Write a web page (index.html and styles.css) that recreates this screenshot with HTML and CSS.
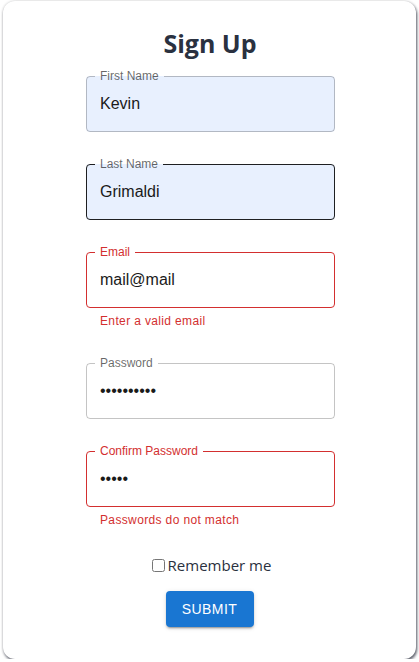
FILE: index.html
```html
<!DOCTYPE html>
<html lang="en">
<head>
<meta charset="utf-8">
<title>Sign Up</title>
<link rel="stylesheet" href="styles.css">
</head>
<body>
<div class="card">
  <h1 class="title">Sign Up</h1>
  <form class="form">
    <div class="field autofill">
      <input class="input" type="text" value="Kevin">
      <fieldset class="outline"><legend class="label">First Name</legend></fieldset>
    </div>
    <div class="field autofill hover">
      <input class="input" type="text" value="Grimaldi">
      <fieldset class="outline"><legend class="label">Last Name</legend></fieldset>
    </div>
    <div class="field-wrap">
      <div class="field error">
        <input class="input" type="text" value="mail@mail">
        <fieldset class="outline"><legend class="label">Email</legend></fieldset>
      </div>
      <p class="helper">Enter a valid email</p>
    </div>
    <div class="field">
      <input class="input" type="password" value="abcdefghij">
      <fieldset class="outline"><legend class="label">Password</legend></fieldset>
    </div>
    <div class="field-wrap last">
      <div class="field error">
        <input class="input" type="password" value="abcde">
        <fieldset class="outline"><legend class="label">Confirm Password</legend></fieldset>
      </div>
      <p class="helper">Passwords do not match</p>
    </div>
    <label class="remember"><input class="check" type="checkbox">Remember me</label>
    <button class="submit" type="button">SUBMIT</button>
  </form>
</div>
</body>
</html>
```

FILE: styles.css
```css
html, body {
  margin: 0;
  padding: 0;
  background: #ffffff;
}

.card {
  box-sizing: border-box;
  margin: 1px 3px 0 3px;
  width: 413px;
  height: 658px;
  border-radius: 12px;
  background: #ffffff;
  box-shadow: 1px 2px 3px rgba(40, 44, 60, 0.75), 0 0 3px rgba(0, 0, 0, 0.18);
  display: flex;
  flex-direction: column;
  align-items: center;
  padding-top: 25px;
}

.title {
  margin: 0 0 0 1px;
  font-family: "Open Sans", sans-serif;
  font-weight: 700;
  font-size: 25px;
  line-height: 34px;
  color: #2a3140;
}

.form {
  margin-top: 16px;
  display: flex;
  flex-direction: column;
  align-items: center;
}

.field {
  position: relative;
  width: 249px;
  height: 56px;
  margin: 0 0 32px 2px;
  border-radius: 4px;
}

.field-wrap {
  display: flex;
  flex-direction: column;
  margin: 0 0 32px 2px;
}

.field-wrap .field {
  margin: 0;
}

.field-wrap.last {
  margin-bottom: 23px;
}

.input {
  box-sizing: border-box;
  width: 100%;
  height: 56px;
  margin: 0;
  padding: 16.5px 14px;
  border: 0;
  border-radius: 4px;
  background: transparent;
  outline: none;
  font-family: "Liberation Sans", Arial, sans-serif;
  font-size: 16px;
  color: #1a1a1a;
}

.autofill .input {
  background: #e8f0fe;
}

.outline {
  position: absolute;
  top: -5px;
  left: 0;
  right: 0;
  bottom: 0;
  margin: 0;
  padding: 0 8px;
  border: 1px solid rgba(0, 0, 0, 0.23);
  border-radius: 4px;
  pointer-events: none;
  min-width: 0;
}

.hover .outline {
  border-color: rgba(0, 0, 0, 0.87);
}

.error .outline {
  border-color: #d32f2f;
}

.label {
  padding: 0 5px;
  font-family: "Liberation Sans", Arial, sans-serif;
  font-size: 12px;
  line-height: 11px;
  color: rgba(0, 0, 0, 0.6);
  white-space: nowrap;
}

.error .label {
  color: #d32f2f;
}

.helper {
  margin: 3px 14px 0;
  font-family: "Liberation Sans", Arial, sans-serif;
  font-size: 12px;
  line-height: 20px;
  letter-spacing: 0.03em;
  color: #d32f2f;
}

.remember {
  display: flex;
  align-items: center;
  height: 24px;
  margin: 0 0 14px 4px;
  font-family: "Open Sans", sans-serif;
  font-size: 15px;
  color: #2a3140;
}

.check {
  width: 13px;
  height: 13px;
  margin: 0 3px 0 0;
}

.submit {
  width: 88px;
  height: 36px;
  padding: 6px 16px;
  border: 0;
  border-radius: 4px;
  background: #1976d2;
  color: #ffffff;
  font-family: "Liberation Sans", Arial, sans-serif;
  font-size: 14px;
  font-weight: 500;
  letter-spacing: 0.03em;
  box-shadow: 0 3px 1px -2px rgba(0, 0, 0, 0.2), 0 2px 2px 0 rgba(0, 0, 0, 0.14), 0 1px 5px 0 rgba(0, 0, 0, 0.12);
}
```
